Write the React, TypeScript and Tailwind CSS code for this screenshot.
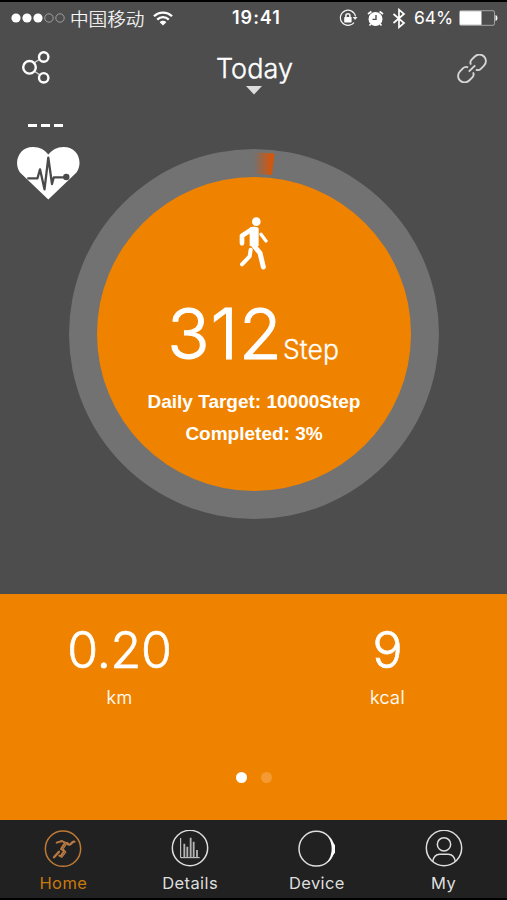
import type { ReactNode } from 'react';

interface StatProps {
  value: string;
  unit: string;
}

interface TabProps {
  label: string;
  active?: boolean;
  children: ReactNode;
}

const StatusBar = () => (
  <div className="flex h-8 items-center text-lg leading-8 text-white">
    <div className="flex w-[232px] items-center pl-[11px]">
      <svg width="54" height="12" viewBox="0 0 54 12" fill="#fff">
        <circle cx="5" cy="6" r="4.6" />
        <circle cx="16" cy="6" r="4.6" />
        <circle cx="27" cy="6" r="4.6" />
        <circle cx="38" cy="6" r="4.2" fill="none" stroke="#a8a8a8" strokeWidth="0.9" />
        <circle cx="49" cy="6" r="4.2" fill="none" stroke="#a8a8a8" strokeWidth="0.9" />
      </svg>
      <span className="ml-[5px] w-[75px] font-['Noto_Sans_CJK_SC',sans-serif] text-[18.6px] leading-8 font-light whitespace-nowrap [-webkit-text-stroke:0.2px_white]">中国移动</span>
      <svg className="ml-2" width="20" height="15" viewBox="0 0 20 15" fill="none" stroke="#fff" strokeWidth="2.3">
        <path d="M1 5.2C6 .3 14 .3 19 5.2" />
        <path d="M4.2 8.6c3.4-3.2 8.2-3.2 11.6 0" />
        <path d="M10 14.4 6.7 11.2c1.9-1.9 4.7-1.9 6.600 0Z" fill="#fff" stroke="none" />
      </svg>
    </div>
    <span className="w-[50px] text-lg font-semibold tracking-[1px] whitespace-nowrap">19:41</span>
    <div className="flex flex-1 items-center justify-end pr-[9px]">
      <svg width="19" height="18" viewBox="0 0 19 18" fill="none" stroke="#f2f2f2" strokeWidth="1.2">
        <path d="M15 13.5A7.6 7.6 0 1 1 16.5 7.5" />
        <path d="M13.7 8h4.8l-2.4 3Z" fill="#f2f2f2" stroke="none" />
        <rect x="5.2" y="8" width="7.4" height="5.4" rx=".6" fill="#fff" stroke="none" />
        <path d="M6.9 8.4V6.7a2 2 0 0 1 4 0v1.7" strokeWidth="1.6" />
      </svg>
      <svg className="ml-[9px]" width="17" height="17" viewBox="0 0 17 17" fill="#fff">
        <circle cx="8.5" cy="9" r="7" />
        <path d="M1 4 4.4 1.5M16 4l-3.4-2.5" stroke="#fff" strokeWidth="1.7" />
        <path d="m3.8 14-1.3 1.6M13.2 14l1.3 1.6" stroke="#fff" strokeWidth="1.6" />
        <path d="M9 5V9.4H5.5" fill="none" stroke="#4d4d4d" strokeWidth="1.4" />
      </svg>
      <svg className="ml-[8px]" width="14" height="21" viewBox="0 0 14 21" fill="none" stroke="#fff" strokeWidth="1.7">
        <path d="M1.5 6 12 15 7 19.300V1.700L12 6 1.500 15" />
      </svg>
      <span className="ml-[8px] w-[41px] text-[17.5px] tracking-[-0.1px] whitespace-nowrap">64%</span>
      <svg className="ml-[4px]" width="39" height="16" viewBox="0 0 39 16">
        <rect x=".5" y=".7" width="35" height="14.6" rx="1.5" fill="none" stroke="#a6a6a6" strokeWidth="1" />
        <rect x="1" y="1.2" width="21.5" height="13.6" fill="#fff" />
        <path d="M36.5 5c2.6.6 2.6 5.4 0 6Z" fill="#fff" />
      </svg>
    </div>
  </div>
);

const Header = () => (
  <header className="flex h-[76px] items-start justify-between pr-5 pl-[22px]">
    <svg className="mt-4" width="28" height="34" viewBox="0 0 28 34" fill="none" stroke="#fff">
      <path d="m12 13 6-4M12 21l6 4" strokeWidth="1.5" stroke="#d5d5d5" />
      <circle cx="7.5" cy="17.3" r="6.3" strokeWidth="2.4" />
      <circle cx="21.7" cy="7" r="4.7" strokeWidth="2.4" />
      <circle cx="21.7" cy="27.8" r="4.7" strokeWidth="2.4" />
    </svg>
    <div className="ml-0.5 flex flex-col items-center pt-[17px]">
      <h1 className="h-9 text-[27px] leading-9 font-light tracking-[0.1px] text-white [-webkit-text-stroke:0.4px_white]">Today</h1>
      <svg className="-mt-px" width="16" height="9" viewBox="0 0 16 9">
        <path d="M0 0h16L8 8.5Z" fill="#ddd" />
      </svg>
    </div>
    {/* Chain link */}
    <svg className="mt-5" width="30" height="29" viewBox="0 0 30 29" fill="none" stroke="#d6d6d6" strokeWidth="1.9">
      <g transform="rotate(-45 15 14.5)">
        <path d="M13 11q-1-3-4-3H4.5a6.3 6.3 0 0 0 0 13H9q3 0 4-3" />
        <path d="M17 11q1-3 4-3h4.5a6.3 6.3 0 0 1 0 13H21q-3 0-4-3" />
        <path d="M10.5 14.5h9" />
      </g>
    </svg>
  </header>
);

const HeartRate = () => (
  <div className="w-[69px] shrink-0 pl-4">
    <div className="mt-[14px] ml-[12px] flex gap-[4px]">
      <div className="h-[3px] w-[9px] bg-white" />
      <div className="h-[3px] w-[9px] bg-white" />
      <div className="h-[3px] w-[9px] bg-white" />
    </div>
    <svg className="mt-[19px]" width="65" height="54" viewBox="0 0 65 54" fill="none">
      <path d="M32.3 53.5 4 26.5C-3 16 3 1 17 1c7 0 12 3 15.3 7.5C36 4 41 1 47.5 1 62 1 67.5 16 60.5 26.5Z" fill="#fff" />
      <path d="M11.3 32.3H21.5L24 23.3 28.5 43.3 32.3 11.7 36 38 37.8 31.3H49" stroke="#4a4a4a" strokeWidth="2.3" strokeLinejoin="round" />
      <circle cx="50.3" cy="31" r="3.2" fill="#4a4a4a" />
    </svg>
  </div>
);

const Walker = () => (
  <svg className="-ml-[3px]" width="30" height="54" viewBox="0 0 90 162" fill="none" stroke="#fff" strokeLinecap="round" strokeLinejoin="round">
    <circle cx="55" cy="14" r="13" fill="#fff" stroke="none" />
    <path d="M40 38 12 56v23" strokeWidth="14" />
    <path d="M35 32q3-3 14-3 13 0 13 6v52H35V40Z" fill="#fff" stroke="none" />
    <path d="m69 52 15 20" strokeWidth="10" />
    <path d="m46 84 20 24 10 42" strokeWidth="15" />
    <path d="m38 98-3 20-23 24" strokeWidth="12" />
  </svg>
);

const StepDial = () => (
  <div className="relative mt-[39px] flex size-[370px] shrink-0 items-center justify-center rounded-full bg-[#727272]">
    {/* Progress arc */}
    <svg className="absolute top-[3px] left-[185px]" width="22" height="26" viewBox="0 0 22 26">
      <defs>
        <linearGradient id="progress">
          <stop offset="0" stopColor="#d4560a" stopOpacity="0" />
          <stop offset="0.85" stopColor="#d4560a" />
        </linearGradient>
      </defs>
      <path d="M0 .5Q10 .5 20.5 1.5L18 23Q9 22 0 22Z" fill="url(#progress)" />
    </svg>
    <div className="flex size-[314px] flex-col items-center rounded-full bg-[#ef8300] pt-10 text-white">
      <Walker />
      <div className="mt-[20px] flex h-[92px] items-baseline whitespace-nowrap">
        <span className="-ml-0.5 text-[70px] leading-[86px] font-light tracking-[1px] [-webkit-text-stroke:1px_white]">312</span>
        <span className="text-[26.5px] font-light [-webkit-text-stroke:0.3px_white]">Step</span>
      </div>
      <p className="mt-[3px] font-['Liberation_Sans',sans-serif] text-[19px] leading-8 font-bold whitespace-nowrap">Daily Target: 10000Step</p>
      <p className="font-['Liberation_Sans',sans-serif] text-[19px] leading-8 font-bold whitespace-nowrap">Completed: 3%</p>
    </div>
  </div>
);

const Stat = ({ value, unit }: StatProps) => (
  <div className="flex w-[239px] flex-col items-center text-white">
    <span className="text-[50px] leading-[60px] font-light tracking-[-0.2px] [-webkit-text-stroke:0.7px_white]">{value}</span>
    <span className="mt-[6px] text-lg leading-6 font-light tracking-[0.4px] [-webkit-text-stroke:0.2px_white]">{unit}</span>
  </div>
);

const Tab = ({ label, active, children }: TabProps) => (
  <div className={`flex flex-1 flex-col items-center pt-[10px] ${active ? 'text-[#c9780f]' : 'text-[#dedede]'}`}>
    <svg width="38" height="38" viewBox="0 0 114 114" fill="none" stroke="currentColor" strokeWidth="4.5">
      {children}
    </svg>
    <span className="mt-[3px] text-[16.5px] leading-6 tracking-[0.4px]">{label}</span>
  </div>
);

export default function App() {
  return (
    <div className="flex h-[900px] w-[507px] flex-col overflow-hidden border-y-2 border-black bg-[#4d4d4d] font-['Inter',sans-serif]">
      <StatusBar />
      <Header />
      <main className="flex h-[484px] items-start">
        <HeartRate />
        <StepDial />
      </main>
      <section className="flex h-[226px] flex-col items-center bg-[#ef8300]">
        <div className="flex w-full justify-between pt-[26px]">
          <Stat value="0.20" unit="km" />
          <Stat value="9" unit="kcal" />
        </div>
        <div className="mt-[62px] flex gap-[14px]">
          <div className="size-[11px] rounded-full bg-white" />
          <div className="size-[11px] rounded-full bg-[#f39a32]" />
        </div>
      </section>
      <nav className="flex h-[78px] bg-[#212121]">
        <Tab label="Home" active>
          <circle cx="57" cy="56" r="53" stroke="#bd7a35" />
          <g strokeLinecap="round" strokeLinejoin="round" stroke="#b87a43">
            <path d="M38 38 54 33 63 38 51 57 60 63 50 79 46 77" strokeWidth="6" />
            <path d="M66 43 57 57 65 66 53 82" strokeWidth="4" />
            <path d="M45 65 30 82" strokeWidth="7" />
            <path d="M69 39q6 9 12 2t10-6" strokeWidth="7" />
          </g>
        </Tab>
        <Tab label="Details">
          <circle cx="57" cy="54" r="53" />
          <path d="M29 24V83H86" strokeWidth="3" />
          <path d="M40 41V83M49 50V83M59 23V83M68 35V83M78 60V83" strokeWidth="5.5" stroke="#b5b5b5" />
        </Tab>
        <Tab label="Device">
          <circle cx="55" cy="56" r="52" />
          <path d="M90 20Q98 24 102 34L111 46V68L103 78Q98 90 88 96Q101 78 101 57T90 20Z" fill="#fff" stroke="none" />
        </Tab>
        <Tab label="My">
          <circle cx="57" cy="54" r="53" />
          <circle cx="57" cy="43" r="20" />
          <path d="M23 95Q27 73 44 73H70Q87 73 91 95" />
        </Tab>
      </nav>
    </div>
  );
}
